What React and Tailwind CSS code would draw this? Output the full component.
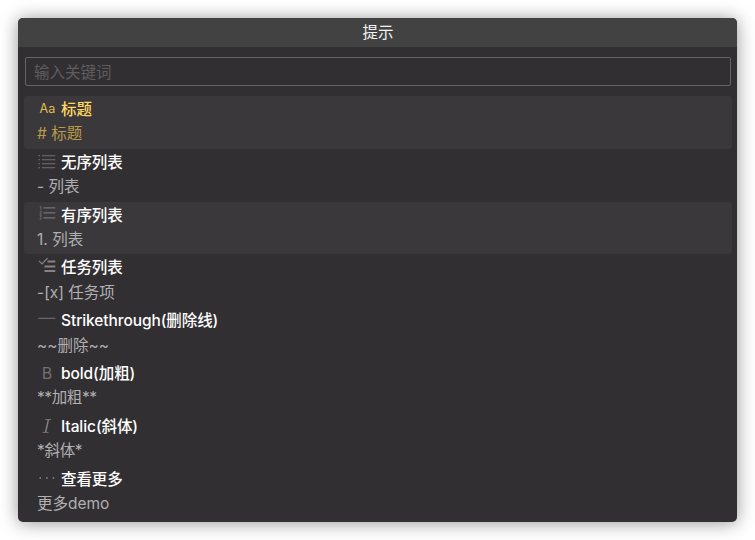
import React from 'react';

const iconClass = 'block h-5 w-[18px] shrink-0 overflow-visible';

function HeadingIcon() {
  return (
    <svg className={iconClass} viewBox="0 0 18 20">
      <text x="1.6" y="15" fill="#e3bd50" className="font-['Inter'] text-[12.5px]">Aa</text>
    </svg>
  );
}

function BulletIcon() {
  return (
    <svg className={iconClass} viewBox="0 0 18 20" fill="none" stroke="#737174" strokeWidth="1.1">
      <path d="M4 4.7H17.3M4 8.7H17.3M4 12.7H17.3M4 16.7H17.3" />
      <path d="M0.3 4.7H2M0.3 8.7H2M0.3 12.7H2M0.3 16.7H2" />
    </svg>
  );
}

function NumberedIcon() {
  return (
    <svg className={iconClass} viewBox="0 0 18 20" fill="none" stroke="#737174">
      <path d="M5.5 3.9H17.3M5.5 8.9H17.3M5.5 13.9H17.3" strokeWidth="1.2" />
      <path d="M1.8 2.7L2.8 2.2V5.5M1.8 7.2H3.2V8.5L1.8 10.1H3.5M1.8 11.7H3.3L2.4 13.3L3.4 14.1L2.8 15.3H1.6" strokeWidth="0.9" />
    </svg>
  );
}

function TaskIcon() {
  return (
    <svg className={iconClass} viewBox="0 0 18 20" fill="none" stroke="#858387">
      <path d="M1 4.8L4 8L9.5 2.2" strokeWidth="1.2" />
      <path d="M9.5 5.6H17.3M6.5 10.6H17.3M6.5 15.1H17.3" strokeWidth="2" />
    </svg>
  );
}

function StrikeIcon() {
  return (
    <svg className={iconClass} viewBox="0 0 18 20" stroke="#727073">
      <path d="M0.3 9.3H17.3" strokeWidth="1.1" />
    </svg>
  );
}

function BoldIcon() {
  return (
    <svg className={iconClass} viewBox="0 0 18 20">
      <text x="3.8" y="16.5" fill="#727073" className="font-['Inter'] text-[16px]">B</text>
    </svg>
  );
}

function ItalicIcon() {
  return (
    <svg className={iconClass} viewBox="0 0 18 20" fill="none" stroke="#7d7b7e">
      <path d="M10.4 4.7L7.6 17.2" strokeWidth="1.6" />
      <path d="M7.4 4.5H13.2M4.6 17.4H10.4" strokeWidth="0.9" />
    </svg>
  );
}

function MoreIcon() {
  return (
    <svg className={iconClass} viewBox="0 0 18 20" fill="#858387">
      <circle cx="2.2" cy="9.9" r="0.9" />
      <circle cx="8.9" cy="9.9" r="0.9" />
      <circle cx="15.4" cy="9.9" r="0.9" />
    </svg>
  );
}

const items = [
  { icon: HeadingIcon, title: '标题', sample: '# 标题', row: 'bg-[#3a383b]', titleColor: 'text-[#ffd75f]', sampleColor: 'text-[#b89a48]' },
  { icon: BulletIcon, title: '无序列表', sample: '- 列表' },
  { icon: NumberedIcon, title: '有序列表', sample: '1. 列表', row: 'bg-[#3a383b]' },
  { icon: TaskIcon, title: '任务列表', sample: '-[x] 任务项' },
  { icon: StrikeIcon, title: 'Strikethrough(删除线)', sample: '~~删除~~' },
  { icon: BoldIcon, title: 'bold(加粗)', sample: '**加粗**', sampleTracking: 'tracking-[-0.4px]' },
  { icon: ItalicIcon, title: 'Italic(斜体)', sample: '*斜体*', sampleTracking: 'tracking-[-0.3px]' },
  { icon: MoreIcon, title: '查看更多', sample: '更多demo' },
];

function Item({
  icon: Icon,
  title,
  sample,
  row = '',
  titleColor = 'text-white',
  sampleColor = 'text-[#b0afb1]',
  sampleTracking = '',
}) {
  return (
    <li className={`h-[52.8px] rounded-[3px] pt-[2px] pl-[14px] whitespace-nowrap ${row}`}>
      <div className="flex h-[24.4px] items-start gap-[5px]">
        <Icon />
        <span className={`leading-6 font-medium tracking-[-0.08px] ${titleColor}`}>{title}</span>
      </div>
      <div className={`-ml-px h-6 leading-6 ${sampleColor} ${sampleTracking}`}>{sample}</div>
    </li>
  );
}

export default function App() {
  return (
    <div className="h-[540px] w-[755px] overflow-hidden bg-white p-[18px] font-['Inter','Noto_Sans_CJK_SC',sans-serif] text-[15.5px]">
      <main className="h-[504px] w-[719px] overflow-hidden rounded-[5px] bg-[#322f32] shadow-[0_1px_18px_rgba(0,0,0,0.42)]">
        <header className="flex h-[29px] items-center justify-center bg-[#424243] pl-px leading-6 text-[#f2f2f2]">提示</header>
        <div className="pt-[10px] pr-[5px] pl-[6px]">
          <input
            className="ml-px block h-[29px] w-[706px] rounded-[2px] border border-[#656366] bg-transparent px-2 pt-[2px] outline-none placeholder:text-[#5e5c5f]"
            placeholder="输入关键词"
          />
          <ul className="mt-[10px]">
            {items.map((item) => (
              <Item key={item.title} {...item} />
            ))}
          </ul>
        </div>
      </main>
    </div>
  );
}
